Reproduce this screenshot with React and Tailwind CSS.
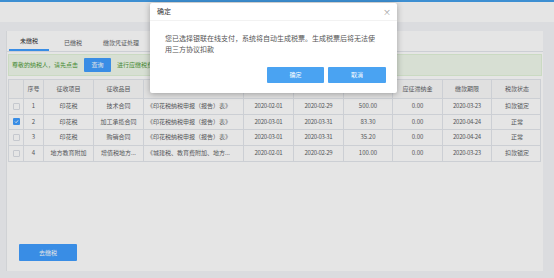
import React from 'react';

const cols = [15, 20, 50, 50, 100, 50, 50, 49, 50, 49, 50];

const rows = [
  { no: 1, item: '印花税', sub: '技术合同', form: '《印花税纳税申报（报告）表》', start: '2020-02-01', end: '2020-02-29', amt: '500.00', fine: '0.00', due: '2020-03-23', status: '扣款锁定', checked: false },
  { no: 2, item: '印花税', sub: '加工承揽合同', form: '《印花税纳税申报（报告）表》', start: '2020-03-01', end: '2020-03-31', amt: '83.30', fine: '0.00', due: '2020-04-24', status: '正常', checked: true },
  { no: 3, item: '印花税', sub: '购销合同', form: '《印花税纳税申报（报告）表》', start: '2020-03-01', end: '2020-03-31', amt: '35.20', fine: '0.00', due: '2020-04-24', status: '正常', checked: false },
  { no: 4, item: '地方教育附加', sub: '增值税地方...', form: '《城建税、教育费附加、地方...', start: '2020-02-01', end: '2020-02-29', amt: '100.00', fine: '0.00', due: '2020-03-23', status: '扣款锁定', checked: false },
];

function Checkbox({ checked }) {
  if (checked) {
    return (
      <span className="flex h-[7px] w-[7px] items-center justify-center rounded-[1px] bg-[#409eff]">
        <svg width="5" height="5" viewBox="0 0 10 10">
          <path d="M2 5.2 L4.2 7.4 L8.2 2.8" fill="none" stroke="#fff" strokeWidth="1.8" />
        </svg>
      </span>
    );
  }
  return <span className="block h-[7px] w-[7px] rounded-[1px] border border-[#dcdfe6] bg-white" />;
}

function Cell({ w, children, className = '' }) {
  return (
    <div
      style={{ width: w }}
      className={`flex shrink-0 items-center justify-center whitespace-nowrap border-r border-[#e4e7ed] px-[3px] last:border-r-0 ${className}`}
    >
      {children}
    </div>
  );
}

export default function App() {
  return (
    <div className="relative h-[278px] w-[554px] overflow-hidden bg-[#f4f5f9] font-['Noto_Sans_CJK_SC','Liberation_Sans',sans-serif] text-[6px] leading-none">
      <div className="h-[2px] bg-[#44a0ea]" />
      <div className="h-[20px] bg-white" />

      {/* main card */}
      <div className="ml-[6px] mt-[9px] flex h-[240px] w-[537px] flex-col border-l border-[#e8eaee] bg-white">
        {/* tabs */}
        <div className="flex h-[21px] border-b border-[#e4e7ed] pl-[2px]">
          <div className="flex w-[40px] items-end justify-center border-b-2 border-[#409eff] pb-[5px] text-[#303133]">未缴税</div>
          <div className="flex w-[48px] items-end justify-center pb-[5px] text-[#606266]">已缴税</div>
          <div className="flex w-[48px] items-end justify-center pb-[5px] text-[#606266]">缴款凭证处理</div>
        </div>

        {/* notice */}
        <div className="ml-[1px] mr-[1px] mt-[2px] flex h-[22px] items-center gap-[6px] border border-[#e1f3d8] bg-[#f0f9eb] pl-[3px] text-[#4f9a3a]">
          <span>尊敬的纳税人，请先点击</span>
          <span className="flex h-[14px] w-[27px] items-center justify-center rounded-[1px] bg-[#409eff] text-white">查询</span>
          <span>进行应缴税费查询</span>
        </div>

        {/* table */}
        <div className="ml-[1px] mt-[3px] w-[533px] border border-[#e4e7ed] text-[#606266]">
          <div className="flex h-[19px] border-b border-[#e4e7ed] bg-[#fafafa]">
            <Cell w={cols[0]} />
            <Cell w={cols[1]}>序号</Cell>
            <Cell w={cols[2]}>征收项目</Cell>
            <Cell w={cols[3]}>征收品目</Cell>
            <Cell w={cols[4]}>申报表名称</Cell>
            <Cell w={cols[5]}>所属期起</Cell>
            <Cell w={cols[6]}>所属期止</Cell>
            <Cell w={cols[7]}>实缴金额</Cell>
            <Cell w={cols[8]}>应征滞纳金</Cell>
            <Cell w={cols[9]}>缴款期限</Cell>
            <Cell w={cols[10]}>税款状态</Cell>
          </div>
          {rows.map((r) => (
            <div key={r.no} className="flex h-[15.5px] border-b border-[#e4e7ed] last:border-b-0">
              <Cell w={cols[0]}><Checkbox checked={r.checked} /></Cell>
              <Cell w={cols[1]}>{r.no}</Cell>
              <Cell w={cols[2]}>{r.item}</Cell>
              <Cell w={cols[3]}>{r.sub}</Cell>
              <Cell w={cols[4]} className="justify-start">{r.form}</Cell>
              <Cell w={cols[5]} className="tracking-[-0.3px]">{r.start}</Cell>
              <Cell w={cols[6]} className="tracking-[-0.3px]">{r.end}</Cell>
              <Cell w={cols[7]}>{r.amt}</Cell>
              <Cell w={cols[8]}>{r.fine}</Cell>
              <Cell w={cols[9]} className="tracking-[-0.3px]">{r.due}</Cell>
              <Cell w={cols[10]}>{r.status}</Cell>
            </div>
          ))}
        </div>

        <div className="flex-1" />
        <div className="mb-[10px] ml-[12px] flex h-[17px] w-[58px] items-center justify-center rounded-[1px] bg-[#409eff] text-white">去缴税</div>
      </div>

      {/* overlay */}
      <div className="absolute inset-0 bg-black/10" />

      {/* dialog */}
      <div className="absolute left-[150px] top-[3px] flex h-[90px] w-[247px] flex-col rounded-[2px] bg-white text-[#333] shadow-[0_1px_6px_rgba(0,0,0,0.3)]">
        <div className="flex h-[18px] items-center justify-between border-b border-[#f2f2f2] pl-[7px] pr-[6px] text-[7px]">
          <span>确定</span>
          <span className="text-[8px] text-[#9a9a9a]">×</span>
        </div>
        <div className="pl-[15px] pr-[17px] pt-[12px] text-[7px] leading-[11px] text-[#555]">
          您已选择银联在线支付，系统将自动生成税票。生成税票后将无法使用三方协议扣款
        </div>
        <div className="mt-[12px] flex justify-end gap-[4px] pr-[11px]">
          <span className="flex h-[16px] w-[57px] items-center justify-center rounded-[1px] bg-[#4aa3f2] text-white">确定</span>
          <span className="flex h-[16px] w-[58px] items-center justify-center rounded-[1px] bg-[#4aa3f2] text-white">取消</span>
        </div>
      </div>
    </div>
  );
}
